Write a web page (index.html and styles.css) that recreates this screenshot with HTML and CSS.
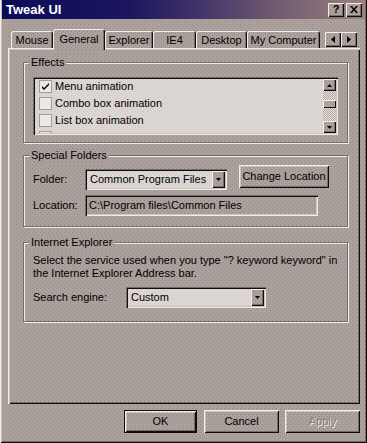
FILE: index.html
```html
<!DOCTYPE html>
<html lang="en">
<head>
  <meta charset="UTF-8" />
  <meta name="viewport" content="width=device-width, initial-scale=1.0" />
  <title>Tweak UI</title>
  <link rel="stylesheet" href="styles.css">
</head>
<body>
<div class="window">
  <div class="titlebar">
    <span class="title">Tweak UI</span>
    <span class="capbtn help">?</span>
    <span class="capbtn close">
      <svg width="8" height="7" viewBox="0 0 8 7"><path d="M0 0h2l2 2.4L6 0h2L5 3.5 8 7H6L4 4.6 2 7H0l3-3.5z"/></svg>
    </span>
  </div>

  <div class="client">
    <div class="tabs">
      <span class="tab tab-mouse">Mouse</span>
      <span class="tab tab-general active">General</span>
      <span class="tab tab-explorer">Explorer</span>
      <span class="tab tab-ie4">IE4</span>
      <span class="tab tab-desktop">Desktop</span>
      <span class="tab tab-mycomp">My Computer</span>
      <div class="tabscroll">
        <span class="sbtn"><svg width="4" height="7" viewBox="0 0 4 7"><path d="M4 0v7L0 3.5z"/></svg></span>
        <span class="sbtn"><svg width="4" height="7" viewBox="0 0 4 7"><path d="M0 0v7l4-3.5z"/></svg></span>
      </div>
    </div>

    <div class="page">
      <fieldset class="group effects">
        <legend>Effects</legend>
        <div class="listbox">
          <div class="items">
            <div class="item"><span class="check"><svg width="11" height="11" viewBox="0 0 11 11"><path d="M2 5l2 2 5-5v2l-5 5-2-2z"/></svg></span>Menu animation</div>
            <div class="item"><span class="check"></span>Combo box animation</div>
            <div class="item"><span class="check"></span>List box animation</div>
            <div class="item"><span class="check"></span></div>
          </div>
          <div class="vscroll">
            <span class="arrow"><svg width="5" height="3" viewBox="0 0 5 3"><path d="M0 3h5L2.5 0z"/></svg></span>
            <div class="track"><span class="thumb"></span></div>
            <span class="arrow"><svg width="5" height="3" viewBox="0 0 5 3"><path d="M0 0h5L2.5 3z"/></svg></span>
          </div>
        </div>
      </fieldset>

      <fieldset class="group folders">
        <legend>Special Folders</legend>
        <div class="folder-row">
          <span class="lbl lbl-folder">Folder:</span>
          <div class="combo combo-folder">
            <span class="combo-text">Common Program Files</span>
            <span class="dropbtn"><svg width="5" height="3" viewBox="0 0 5 3"><path d="M0 0h5L2.5 3z"/></svg></span>
          </div>
          <span class="btn btn-change">Change Location</span>
        </div>
        <div class="location-row">
          <span class="lbl lbl-folder">Location:</span>
          <div class="field">C:\Program files\Common Files</div>
        </div>
      </fieldset>

      <fieldset class="group ie">
        <legend>Internet Explorer</legend>
        <p class="desc">Select the service used when you type "? keyword keyword" in the Internet Explorer Address bar.</p>
        <div class="search-row">
          <span class="lbl lbl-search">Search engine:</span>
          <div class="combo combo-search">
            <span class="combo-text">Custom</span>
            <span class="dropbtn"><svg width="5" height="3" viewBox="0 0 5 3"><path d="M0 0h5L2.5 3z"/></svg></span>
          </div>
        </div>
      </fieldset>
    </div>

    <div class="buttons">
      <span class="btn btn-ok">OK</span>
      <span class="btn btn-cancel">Cancel</span>
      <span class="btn btn-apply disabled">Apply</span>
    </div>
  </div>
</div>
</body>
</html>
```

FILE: styles.css
```css
:root {
  --face: #ada19b;
  --hi: #f2ede9;
  --light: #cdc3bd;
  --shadow: #756d69;
  --dark: #110d0d;
  --field: #dcd7d3;
  --tex: conic-gradient(from 270deg at 1px 1px, #8c8991 25%, transparent 0) 0 0 / 4px 4px,
         conic-gradient(from 270deg at 1px 1px, #8c8991 25%, transparent 0) 2px 2px / 4px 4px;
  --ftex: conic-gradient(from 270deg at 1px 1px, #cbc7ca 25%, transparent 0) 0 0 / 4px 4px,
          conic-gradient(from 270deg at 1px 1px, #cbc7ca 25%, transparent 0) 2px 2px / 4px 4px;
}

* { box-sizing: border-box; }

body {
  margin: 0;
  background: var(--tex), var(--face);
  font-family: "Liberation Sans", Arial, sans-serif;
  font-size: 11px;
  line-height: 13px;
  color: #000;
}

.window {
  width: 367px;
  height: 443px;
  padding: 0 2px 2px 2px;
  background: var(--tex), var(--face);
  box-shadow: inset 1px 0 var(--hi), inset -1px -1px var(--dark),
              inset 2px 0 var(--light), inset -2px -2px var(--shadow);
}

/* title bar */
.titlebar {
  height: 19px;
  display: flex;
  align-items: center;
  padding: 0 3px 0 4px;
  background: linear-gradient(90deg, #0c0a58 0%, #1c165f 35%, #43356a 55%, #6f5a6f 75%, #9a827d 100%);
}
.title {
  flex: 1;
  color: #fff;
  font-weight: bold;
  font-size: 13px;
}
.capbtn {
  width: 16px;
  height: 14px;
  display: flex;
  align-items: center;
  justify-content: center;
  background: var(--tex), var(--face);
  box-shadow: inset 1px 1px var(--hi), inset -1px -1px var(--dark), inset -2px -2px var(--shadow);
  font-weight: bold;
  font-size: 11px;
}
.capbtn.close { margin-left: 2px; }

/* tabs */
.client {
  padding: 10px 5px 0 6px;
}
.tabs {
  display: flex;
  align-items: flex-end;
  height: 19px;
  margin-left: 3px;
  position: relative;
  z-index: 1;
}
.tab {
  height: 17px;
  display: flex;
  align-items: center;
  justify-content: center;
  border-radius: 2px 2px 0 0;
  background: var(--tex), var(--face);
  box-shadow: inset 1px 1px var(--hi), inset -1px 0 var(--dark), inset -2px 0 var(--shadow);
  padding-top: 1px;
}
.tab.active {
  height: 21px;
  margin-bottom: -2px;
  padding-bottom: 2px;
}
.tab-mouse { width: 42px; }
.tab-general { width: 52px; }
.tab-explorer { width: 48px; }
.tab-ie4 { width: 43px; }
.tab-desktop { width: 51px; }
.tab-mycomp { width: 73px; }

.tabscroll {
  display: flex;
  margin-left: 5px;
  margin-bottom: 1px;
}
.sbtn {
  width: 16px;
  height: 15px;
  display: flex;
  align-items: center;
  justify-content: center;
  background: var(--tex), var(--face);
  box-shadow: inset 1px 1px var(--hi), inset -1px -1px var(--dark), inset -2px -2px var(--shadow);
}

/* page */
.page {
  height: 356px;
  padding: 8px 12px 0 15px;
  box-shadow: inset 1px 1px var(--hi), inset 2px 2px var(--light),
              inset -1px -1px var(--dark), inset -2px -2px var(--shadow);
}

.group {
  margin: 0;
  border: 1px solid var(--shadow);
  box-shadow: inset 1px 1px var(--hi), 1px 1px var(--hi);
  padding: 0 9px;
  min-width: 0;
}
.group legend {
  margin-left: -4px;
  padding: 0 2px;
  background: var(--tex), var(--face);
}
.effects { padding-top: 8px; padding-bottom: 7px; }
.folders { margin-top: 6px; padding-top: 3px; padding-bottom: 10px; }
.ie { margin-top: 9px; padding-top: 5px; padding-bottom: 13px; }

/* listbox */
.listbox {
  height: 58px;
  display: flex;
  padding: 2px;
  background: var(--ftex), var(--field);
  box-shadow: inset 1px 1px var(--shadow), inset 2px 2px var(--dark),
              inset -1px -1px var(--hi), inset -2px -2px var(--light);
}
.items {
  flex: 1;
  overflow: hidden;
}
.item {
  height: 17px;
  display: flex;
  align-items: flex-start;
  padding-left: 4px;
  line-height: 15px;
}
.check {
  width: 13px;
  height: 13px;
  margin-top: 1px;
  margin-right: 3px;
  display: flex;
  align-items: center;
  justify-content: center;
  background: #ece8e6;
  box-shadow: inset 0 0 0 1px #a39d99;
}
.vscroll {
  width: 13px;
  display: flex;
  flex-direction: column;
}
.arrow {
  height: 12px;
  display: flex;
  align-items: center;
  justify-content: center;
  background: var(--tex), var(--face);
  box-shadow: inset 1px 1px var(--hi), inset -1px -1px var(--dark), inset -2px -2px var(--shadow);
}
.track {
  flex: 1;
  padding-top: 9px;
  background: repeating-conic-gradient(#e4dfdb 0 25%, #b3a9a3 0 50%) 0 0 / 2px 2px;
}
.thumb {
  display: block;
  height: 8px;
  background: var(--face);
  box-shadow: inset 1px 1px var(--hi), inset -1px -1px var(--dark);
}

/* special folders */
.folder-row, .location-row, .search-row {
  display: flex;
  align-items: flex-start;
}
.lbl { line-height: 21px; }
.lbl-folder { width: 52px; margin-top: 4px; }
.location-row { margin-top: 5px; }
.location-row .lbl-folder { margin-top: 0; }

.combo {
  height: 21px;
  display: flex;
  align-items: center;
  padding: 2px;
  background: var(--ftex), var(--field);
  box-shadow: inset 1px 1px var(--shadow), inset 2px 2px var(--dark),
              inset -1px -1px var(--hi), inset -2px -2px var(--light);
}
.combo-text {
  flex: 1;
  padding-left: 3px;
  white-space: nowrap;
  overflow: hidden;
}
.dropbtn {
  width: 13px;
  height: 17px;
  display: flex;
  align-items: center;
  justify-content: center;
  background: var(--tex), var(--face);
  box-shadow: inset 1px 1px var(--hi), inset -1px -1px var(--dark), inset -2px -2px var(--shadow);
}
.combo-folder { width: 142px; margin-top: 4px; }
.combo-search { width: 140px; }
.lbl-search { width: 93px; }

.field {
  width: 233px;
  height: 21px;
  line-height: 17px;
  padding: 2px 4px;
  box-shadow: inset 1px 1px var(--shadow), inset 2px 2px var(--dark),
              inset -1px -1px var(--hi), inset -2px -2px var(--light);
}

.btn {
  height: 23px;
  display: flex;
  align-items: center;
  justify-content: center;
  background: var(--tex), var(--face);
  box-shadow: inset 1px 1px var(--hi), inset -1px -1px var(--dark),
              inset 2px 2px var(--light), inset -2px -2px var(--shadow);
}
.btn-change { width: 90px; margin-left: 12px; }

.desc { margin: 0 0 7px; }

/* dialog buttons */
.buttons {
  display: flex;
  justify-content: flex-end;
  padding-top: 6px;
}
.btn-ok {
  width: 73px;
  border: 1px solid var(--dark);
}
.btn-cancel { width: 75px; margin-left: 7px; }
.btn-apply { width: 75px; margin-left: 6px; }
.disabled {
  color: #847b77;
  text-shadow: 1px 1px var(--hi);
}
```
